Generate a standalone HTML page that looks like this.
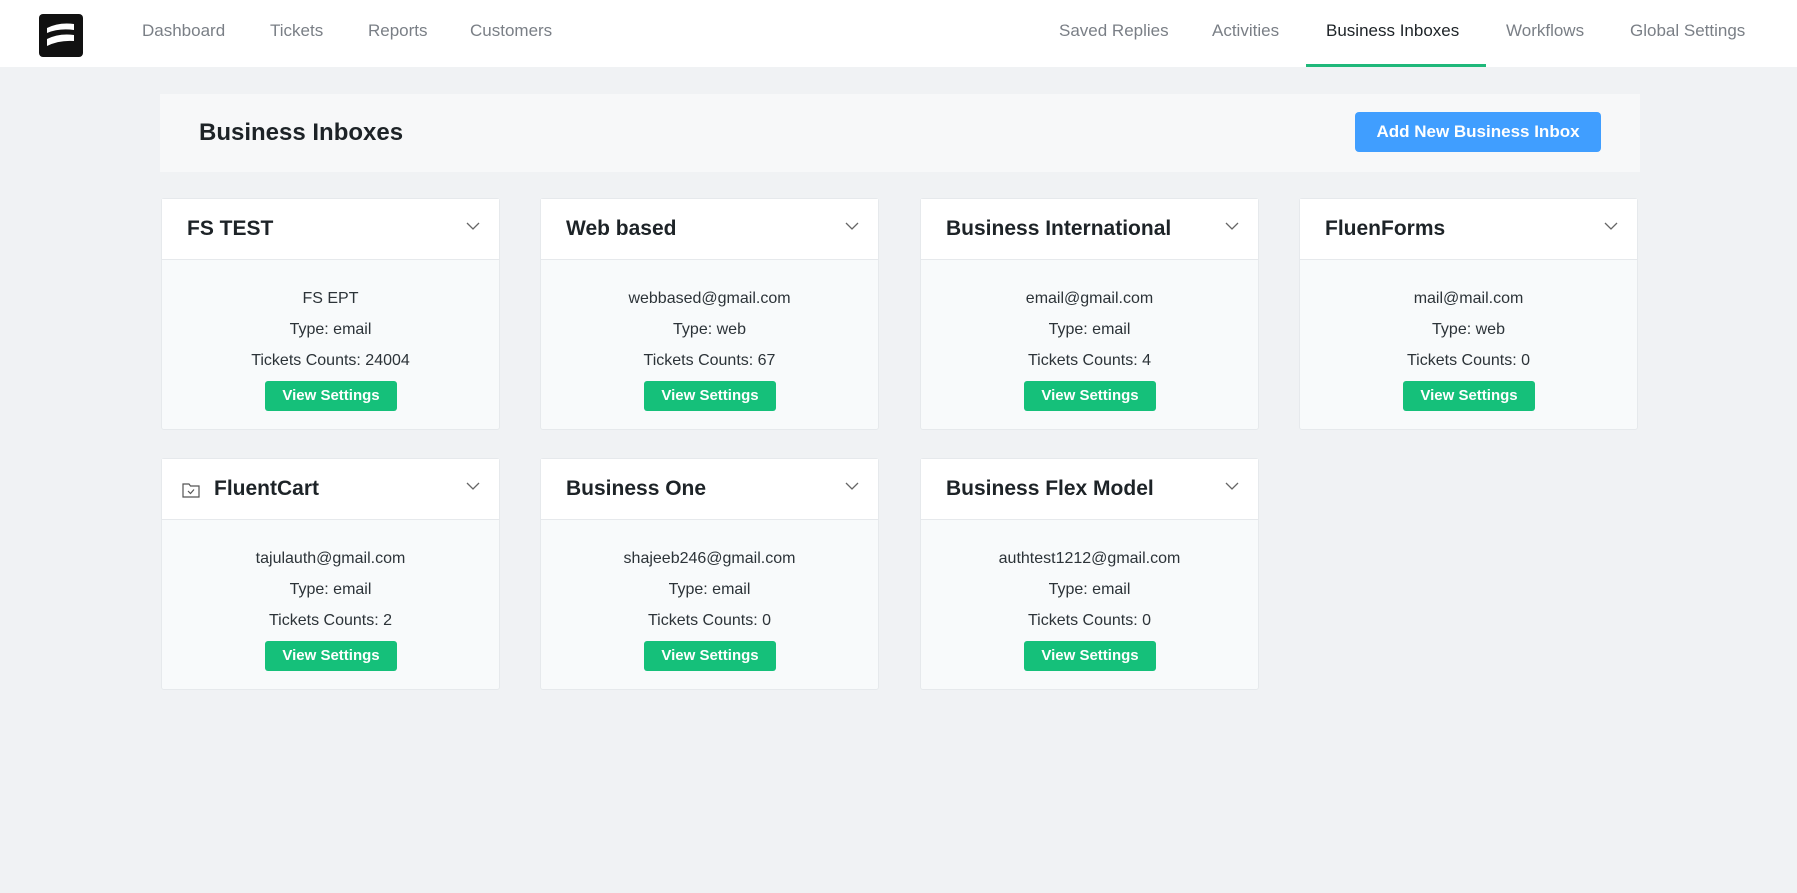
<!DOCTYPE html>
<html><head><meta charset="utf-8"><style>
*{box-sizing:border-box;margin:0;padding:0}
body{width:1797px;height:893px;background:#f0f2f4;font-family:"Liberation Sans",Helvetica,Arial,sans-serif;position:relative;overflow:hidden}
.nav{position:absolute;left:0;top:0;width:1797px;height:67px;background:#fff}
.nav a{position:absolute;top:21px;font-size:17px;color:#7a7f86;text-decoration:none}
.nav a.act{color:#1d2327}
.ul{position:absolute;left:1306px;top:64px;width:180px;height:3px;background:#1fb87a}
.logo{position:absolute;left:39px;top:14px;width:44px;height:43px;background:#111;border-radius:4px}
.head{position:absolute;left:160px;top:94px;width:1480px;height:78px;background:#f7f8f9}
.head h1{position:absolute;left:39px;top:25px;font-size:24px;font-weight:bold;color:#1d2327}
.btn{position:absolute;left:1195px;top:18px;width:246px;height:40px;background:#409eff;color:#fff;border-radius:4px;font-size:17px;font-weight:bold;text-align:center;line-height:40px}
.card{position:absolute;width:339px;height:232px;background:#f8fafb;border:1px solid #e6e9ec;border-radius:3px}
.card .h{height:61px;background:#fff;border-bottom:1px solid #e6e9ec;position:relative}
.card .h span{position:absolute;left:25px;top:18px;font-size:21px;font-weight:bold;color:#1d2327}
.card .h svg.ch{position:absolute;left:304px;top:22px}
.card p{position:absolute;left:0;width:100%;text-align:center;font-size:16px;color:#2c3338}
.card .vs{position:absolute;left:103px;top:182px;width:132px;height:30px;background:#15c07a;color:#fff;border-radius:3px;font-size:15px;font-weight:bold;text-align:center;line-height:30px}
</style></head><body>
<div class="nav">
<div class="logo"><svg width="44" height="43" viewBox="0 0 44 43"><path d="M8 14 Q20 8 35 10 L35 16 Q20 14 8 19Z M8 25 Q20 19 35 21 L35 27 Q20 26 8 32Z" fill="#fff"/></svg></div>
<a style="left:142px">Dashboard</a><a style="left:270px">Tickets</a><a style="left:368px">Reports</a><a style="left:470px">Customers</a>
<a style="left:1059px">Saved Replies</a><a style="left:1212px">Activities</a><a class="act" style="left:1326px">Business Inboxes</a><a style="left:1506px">Workflows</a><a style="left:1630px">Global Settings</a>
<div class="ul"></div>
</div>
<div class="head"><h1>Business Inboxes</h1><div class="btn">Add New Business Inbox</div></div>

<div class="card" style="left:161px;top:198px"><div class="h"><span>FS TEST</span><svg class="ch" width="14" height="10"><path d="M1 2 L7 8 L13 2" fill="none" stroke="#666" stroke-width="1.3"/></svg></div><p style="top:91px">FS EPT</p><p style="top:122px">Type: email</p><p style="top:153px">Tickets Counts: 24004</p><div class="vs">View Settings</div></div>
<div class="card" style="left:540px;top:198px"><div class="h"><span>Web based</span><svg class="ch" width="14" height="10"><path d="M1 2 L7 8 L13 2" fill="none" stroke="#666" stroke-width="1.3"/></svg></div><p style="top:91px">webbased@gmail.com</p><p style="top:122px">Type: web</p><p style="top:153px">Tickets Counts: 67</p><div class="vs">View Settings</div></div>
<div class="card" style="left:920px;top:198px"><div class="h"><span>Business International</span><svg class="ch" width="14" height="10"><path d="M1 2 L7 8 L13 2" fill="none" stroke="#666" stroke-width="1.3"/></svg></div><p style="top:91px">email@gmail.com</p><p style="top:122px">Type: email</p><p style="top:153px">Tickets Counts: 4</p><div class="vs">View Settings</div></div>
<div class="card" style="left:1299px;top:198px"><div class="h"><span>FluenForms</span><svg class="ch" width="14" height="10"><path d="M1 2 L7 8 L13 2" fill="none" stroke="#666" stroke-width="1.3"/></svg></div><p style="top:91px">mail@mail.com</p><p style="top:122px">Type: web</p><p style="top:153px">Tickets Counts: 0</p><div class="vs">View Settings</div></div>

<div class="card" style="left:161px;top:458px"><div class="h"><svg style="position:absolute;left:20px;top:23px" width="18" height="16"><path d="M1 2 H7 L8.5 4 H17 V15 H1Z" fill="none" stroke="#555" stroke-width="1.2"/><path d="M6 9 L8.5 11.5 L12 7.5" fill="none" stroke="#555" stroke-width="1.2"/></svg><span style="left:52px">FluentCart</span><svg class="ch" width="14" height="10"><path d="M1 2 L7 8 L13 2" fill="none" stroke="#666" stroke-width="1.3"/></svg></div><p style="top:91px">tajulauth@gmail.com</p><p style="top:122px">Type: email</p><p style="top:153px">Tickets Counts: 2</p><div class="vs">View Settings</div></div>
<div class="card" style="left:540px;top:458px"><div class="h"><span>Business One</span><svg class="ch" width="14" height="10"><path d="M1 2 L7 8 L13 2" fill="none" stroke="#666" stroke-width="1.3"/></svg></div><p style="top:91px">shajeeb246@gmail.com</p><p style="top:122px">Type: email</p><p style="top:153px">Tickets Counts: 0</p><div class="vs">View Settings</div></div>
<div class="card" style="left:920px;top:458px"><div class="h"><span>Business Flex Model</span><svg class="ch" width="14" height="10"><path d="M1 2 L7 8 L13 2" fill="none" stroke="#666" stroke-width="1.3"/></svg></div><p style="top:91px">authtest1212@gmail.com</p><p style="top:122px">Type: email</p><p style="top:153px">Tickets Counts: 0</p><div class="vs">View Settings</div></div>
</body></html>
